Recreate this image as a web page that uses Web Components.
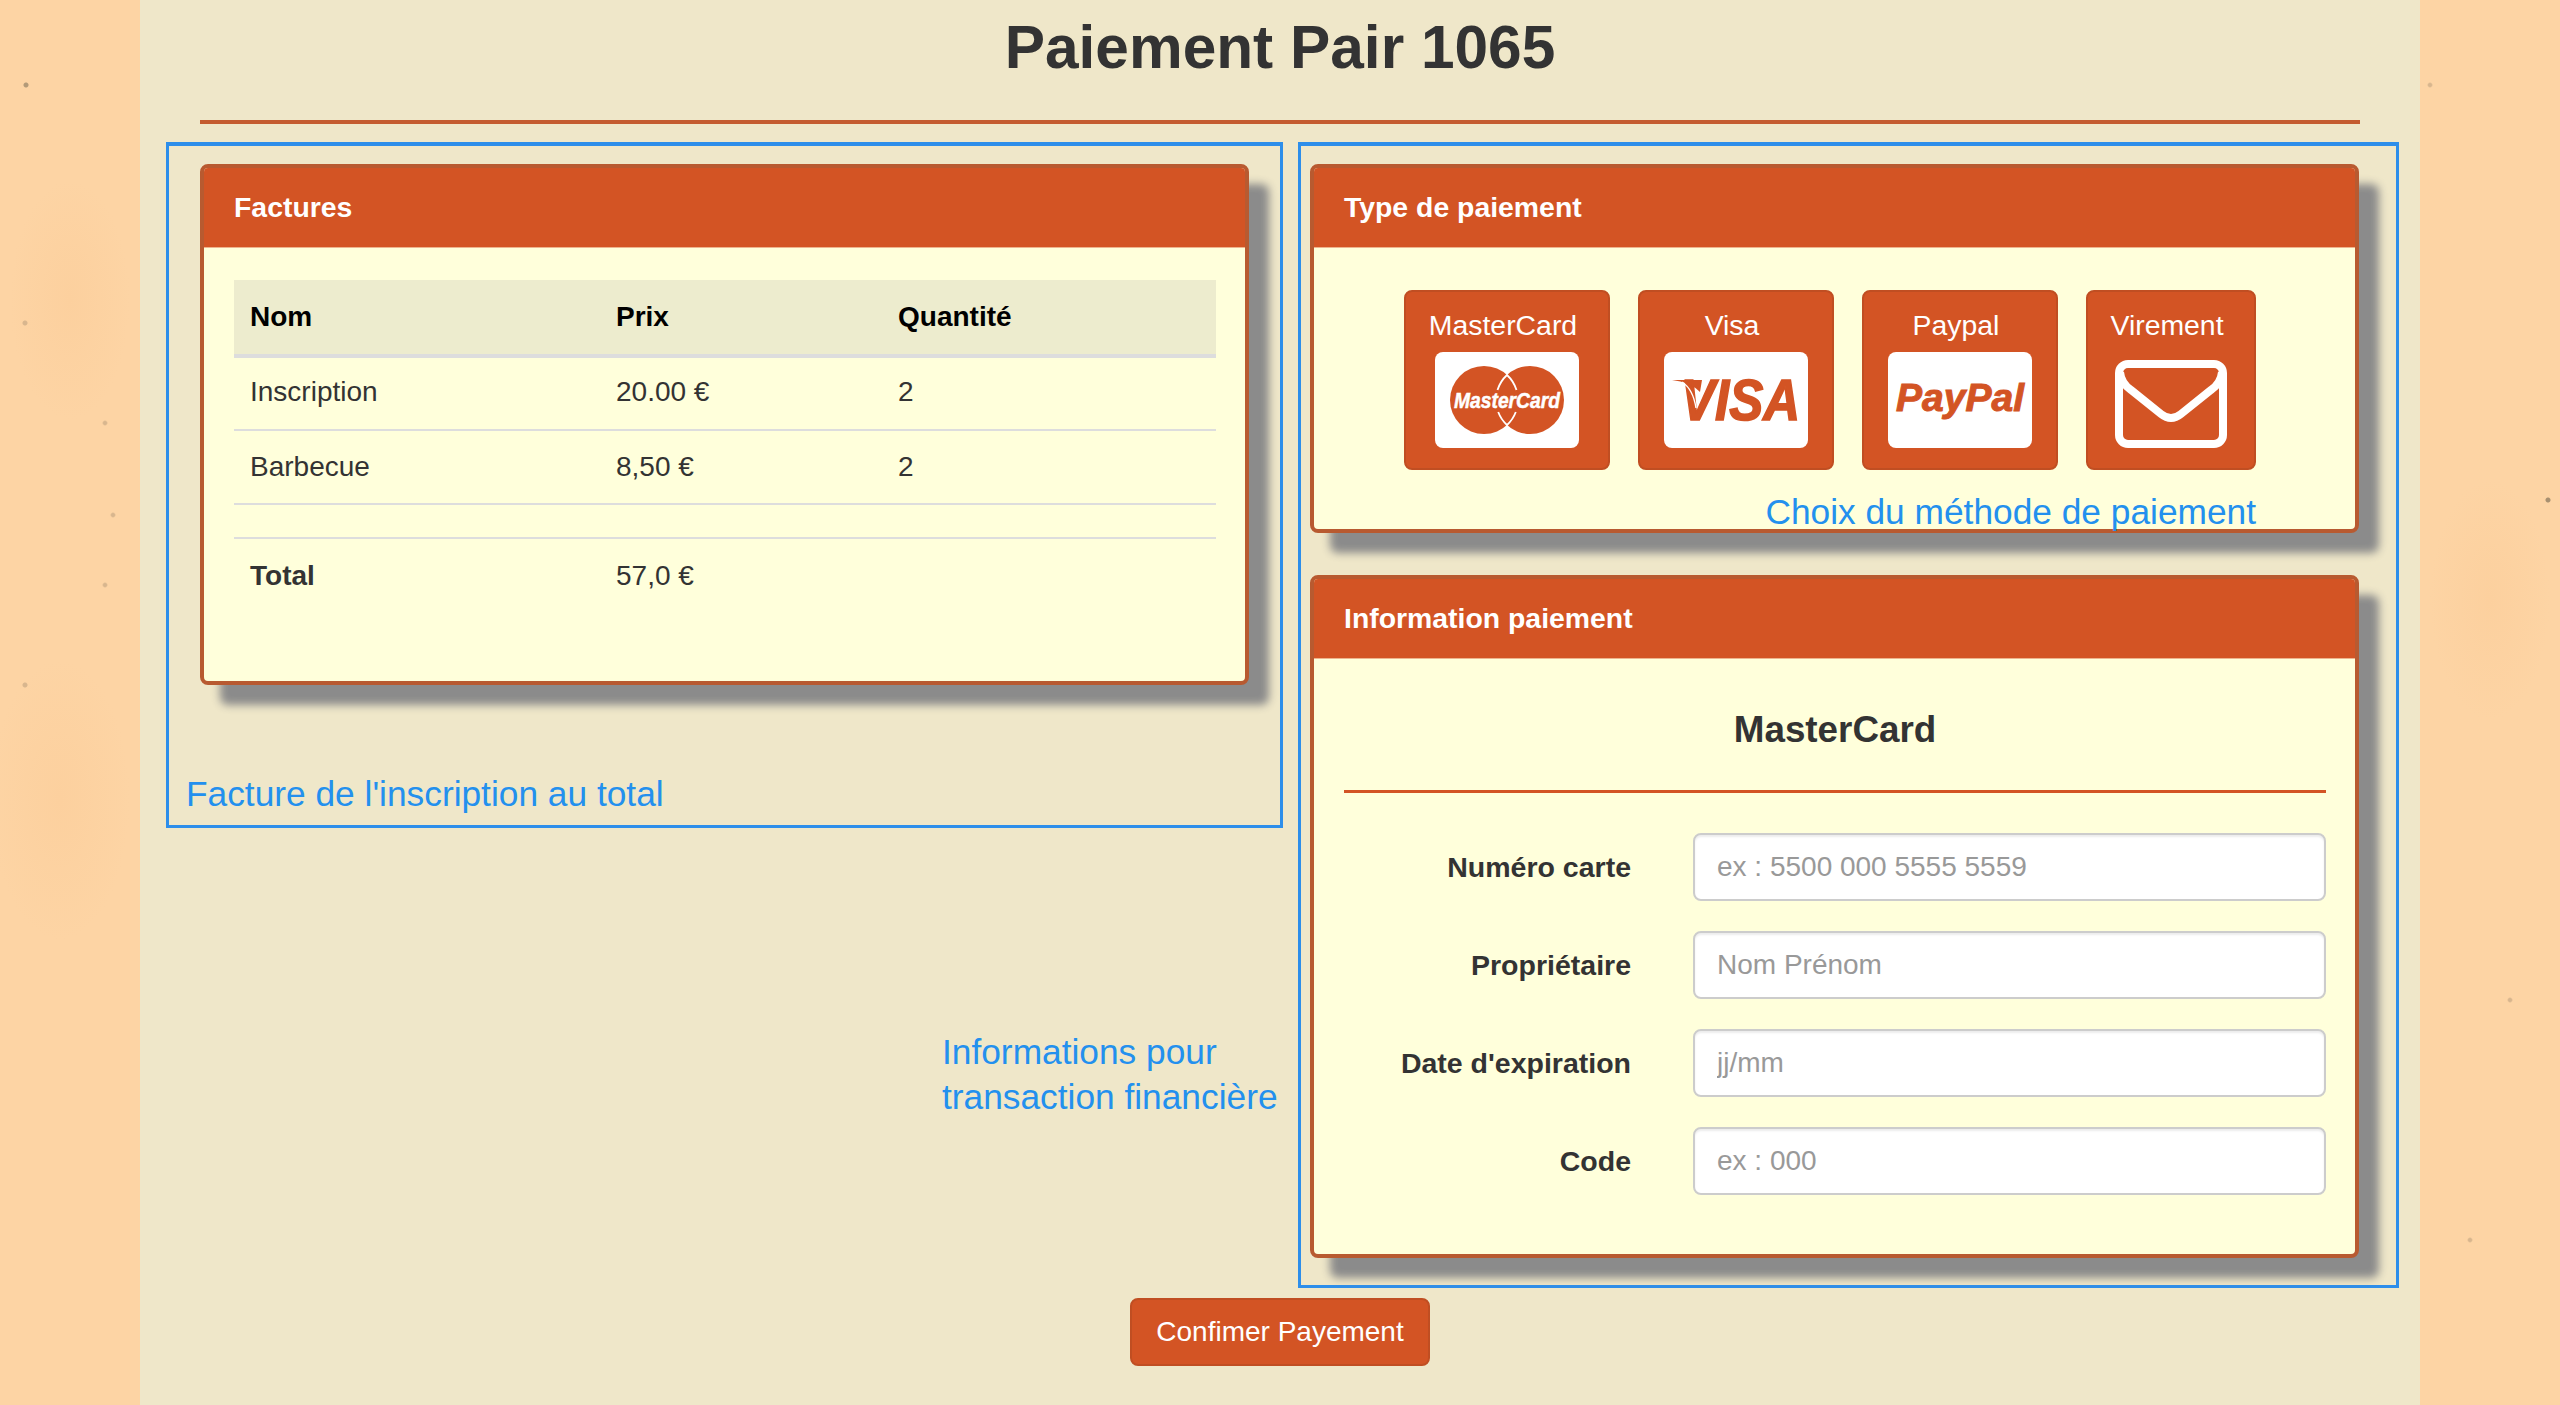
<!DOCTYPE html>
<html lang="fr">
<head>
<meta charset="utf-8">
<title>Paiement Pair 1065</title>
<style>
html, body { margin: 0; padding: 0; }
body { font-family: "Liberation Sans", Arial, sans-serif; font-size: 28px; color: #333; }
</style>
</head>
<body>
<paper-page>
	<page-title>Paiement Pair 1065</page-title>
	<two-columns>
		<div slot="left">
			<note-box style="--pad: 18px 33px 9px 31px; --w: 1117px">
				<pay-panel heading="Factures" style="--body-pad: 32px 29px 69px 30px">
					<invoice-table></invoice-table>
				</pay-panel>
				<note-text style="margin: 86px 0 0 -14px">Facture de l'inscription au total</note-text>
			</note-box>
			<note-text style="margin: 201px 0 0 776px">Informations pour<br>transaction financière</note-text>
		</div>
		<div slot="right">
			<note-box style="--pad: 18px 37px 27px 9px; --w: 1101px">
				<pay-panel heading="Type de paiement" style="--body-pad: 42px 0 0 0; height: 369px">
					<method-list></method-list>
					<note-text style="text-align: right; margin: 21px 99px 0 0; line-height: 42px">Choix du méthode de paiement</note-text>
				</pay-panel>
				<pay-panel heading="Information paiement" style="margin-top: 42px; --body-pad: 47px 29px 59px 30px">
					<card-form heading="MasterCard"></card-form>
				</pay-panel>
			</note-box>
		</div>
	</two-columns>
	<confirm-button>Confimer Payement</confirm-button>
</paper-page>

<template id="method-list-tpl">
	<style>
	:host { display: flex; gap: 28px; margin-left: 90px; }
	svg { display: block; }
	</style>
	<pay-button label="MasterCard" style="width: 206px">
		<svg width="144" height="96" viewBox="0 0 144 96">
			<rect width="144" height="96" rx="8" fill="#fff"/>
			<circle cx="49" cy="48" r="34" fill="#d35424"/>
			<circle cx="95" cy="48" r="34" fill="#d35424"/>
			<path d="M62.5 38 A34 34 0 0 1 72 23 A34 34 0 0 1 81.5 38" fill="none" stroke="#fff" stroke-width="1.8"/>
			<path d="M63.2 60 A34 34 0 0 0 72 73 A34 34 0 0 0 80.8 60" fill="none" stroke="#fff" stroke-width="1.8"/>
			<text x="19" y="56" textLength="106" lengthAdjust="spacingAndGlyphs" font-family="Liberation Sans" font-size="22" font-weight="700" font-style="italic" fill="#fff" stroke="#fff" stroke-width="0.5">MasterCard</text>
		</svg>
	</pay-button>
	<pay-button label="Visa" style="width: 196px">
		<svg width="144" height="96" viewBox="0 0 144 96">
			<rect width="144" height="96" rx="8" fill="#fff"/>
			<text x="17" y="68" textLength="119" lengthAdjust="spacingAndGlyphs" font-family="Liberation Sans" font-size="57" font-weight="700" font-style="italic" fill="#d35424" stroke="#d35424" stroke-width="1.6">VISA</text>
			<path d="M8 28 H38 L36 40 Q26 30 8 28Z" fill="#d35424"/>
			<path d="M18 30 Q29 37 32 56" fill="none" stroke="#fff" stroke-width="1.4"/>
		</svg>
	</pay-button>
	<pay-button label="Paypal" style="width: 196px">
		<svg width="144" height="96" viewBox="0 0 144 96">
			<rect width="144" height="96" rx="8" fill="#fff"/>
			<text x="8" y="59" textLength="128" lengthAdjust="spacingAndGlyphs" font-family="Liberation Sans" font-size="39" font-weight="700" font-style="italic" fill="#d35424" stroke="#d35424" stroke-width="1">PayPal</text>
		</svg>
	</pay-button>
	<pay-button label="Virement" style="width: 170px">
		<svg width="112" height="96" viewBox="0 0 112 96">
			<rect x="4" y="12" width="104" height="80" rx="9" fill="none" stroke="#fff" stroke-width="8"/>
			<path d="M5 20 Q6 31 16 38 L46 62 Q56 70 66 62 L96 38 Q106 31 107 20" fill="none" stroke="#fff" stroke-width="8"/>
		</svg>
	</pay-button>
</template>

<script>
function makeTemplate(html) {
	const template = document.createElement('template');
	template.innerHTML = html;
	return template;
}

class BaseElement extends HTMLElement {
	constructor(template) {
		super();
		this.attachShadow({ mode: 'open' });
		this.shadowRoot.appendChild(template.content.cloneNode(true));
	}
}

const paperTpl = makeTemplate(`
	<style>
	:host {
		display: block;
		min-height: 1405px;
		background-color: #fdd4a4;
		background-image:
			radial-gradient(circle at 26px 85px, #b39a78 0 2px, transparent 3px),
			radial-gradient(circle at 25px 323px, #d8b68e 0 2px, transparent 3px),
			radial-gradient(circle at 105px 423px, #d8b68e 0 1.5px, transparent 3px),
			radial-gradient(circle at 113px 515px, #d8b68e 0 1.5px, transparent 3px),
			radial-gradient(circle at 105px 585px, #d8b68e 0 1.5px, transparent 3px),
			radial-gradient(circle at 25px 685px, #d8b68e 0 2px, transparent 3px),
			radial-gradient(circle at 2548px 500px, #a89070 0 2px, transparent 3px),
			radial-gradient(circle at 2430px 85px, #d8b68e 0 1.5px, transparent 3px),
			radial-gradient(circle at 2510px 1000px, #d8b68e 0 1.5px, transparent 3px),
			radial-gradient(circle at 2470px 1240px, #d8b68e 0 1.5px, transparent 3px),
			radial-gradient(ellipse 60px 120px at 70px 300px, #fcd09e, transparent),
			radial-gradient(ellipse 70px 140px at 60px 800px, #fcd09e, transparent),
			radial-gradient(ellipse 60px 120px at 2490px 600px, #fcd09e, transparent);
	}
	.content {
		display: flow-root;
		width: 2280px;
		min-height: 1405px;
		margin: 0 auto;
		background: #efe7c9;
		box-sizing: border-box;
	}
	</style>
	<div class="content"><slot></slot></div>
`);
class PaperPage extends BaseElement {
	constructor() { super(paperTpl); }
}

const titleTpl = makeTemplate(`
	<style>
	:host { display: block; padding-top: 14px; }
	h1 {
		margin: 0 0 40px;
		font-size: 60.4px;
		line-height: 66px;
		font-weight: 700;
		text-align: center;
		color: #333;
	}
	hr {
		margin: 0 60px 18px;
		border: none;
		height: 4px;
		background: #c45c30;
	}
	</style>
	<h1><slot></slot></h1>
	<hr>
`);
class PageTitle extends BaseElement {
	constructor() { super(titleTpl); }
}

const columnsTpl = makeTemplate(`
	<style>
	:host {
		display: flex;
		align-items: flex-start;
		gap: 15px;
		padding-left: 26px;
	}
	</style>
	<slot name="left"></slot>
	<slot name="right"></slot>
`);
class TwoColumns extends BaseElement {
	constructor() { super(columnsTpl); }
}

const boxTpl = makeTemplate(`
	<style>
	:host {
		display: block;
		box-sizing: border-box;
		width: var(--w);
		padding: var(--pad);
		border: solid #2d8eea;
		border-width: 4px 3px 3px 3px;
	}
	</style>
	<slot></slot>
`);
class NoteBox extends BaseElement {
	constructor() { super(boxTpl); }
}

const noteTpl = makeTemplate(`
	<style>
	:host {
		display: block;
		font-size: 35.3px;
		line-height: 45px;
		color: #2390ee;
		white-space: nowrap;
	}
	</style>
	<slot></slot>
`);
class NoteText extends BaseElement {
	constructor() { super(noteTpl); }
}

const panelTpl = makeTemplate(`
	<style>
	:host {
		display: block;
		box-sizing: border-box;
		width: 1049px;
		background: #ffffdb;
		border: 4px solid #b85a30;
		border-radius: 8px;
		box-shadow: 20px 20px 8px #8b8b8b;
	}
	header {
		box-sizing: border-box;
		height: 80px;
		padding: 0 30px;
		display: flex;
		align-items: center;
		background: #d35424;
		border-bottom: 1px solid #eeb48e;
		border-radius: 4px 4px 0 0;
		color: #fff;
		font-size: 28.4px;
		font-weight: 700;
	}
	.body { padding: var(--body-pad); }
	</style>
	<header></header>
	<div class="body"><slot></slot></div>
`);
class PayPanel extends BaseElement {
	constructor() { super(panelTpl); }
	connectedCallback() {
		this.shadowRoot.querySelector('header').textContent = this.getAttribute('heading');
	}
}

const tableTpl = makeTemplate(`
	<style>
	:host { display: block; }
	table { width: 100%; border-collapse: collapse; table-layout: fixed; font-size: 28px; }
	th, td { padding: 0 16px; text-align: left; height: 74px; box-sizing: border-box; border-bottom: 2px solid #ddd; }
	thead th { height: 76px; background: #edecce; color: #000; border-bottom: 4px solid #ddd; }
	td { color: #333; }
	tr.first td { padding-bottom: 3px; }
	tr.empty td { height: 34px; }
	tr.total td { border-bottom: none; height: 74px; }
	tr.total td:first-child { font-weight: 700; }
	</style>
	<table>
		<colgroup><col style="width: 366px"><col style="width: 282px"><col></colgroup>
		<thead><tr><th>Nom</th><th>Prix</th><th>Quantité</th></tr></thead>
		<tbody>
			<tr class="first"><td>Inscription</td><td>20.00 €</td><td>2</td></tr>
			<tr><td>Barbecue</td><td>8,50 €</td><td>2</td></tr>
			<tr class="empty"><td></td><td></td><td></td></tr>
			<tr class="total"><td>Total</td><td>57,0 €</td><td></td></tr>
		</tbody>
	</table>
`);
class InvoiceTable extends BaseElement {
	constructor() { super(tableTpl); }
}

const payBtnTpl = makeTemplate(`
	<style>
	:host {
		display: flex;
		flex-direction: column;
		align-items: center;
		box-sizing: border-box;
		height: 180px;
		padding-top: 16px;
		background: #d35424;
		border: 2px solid #c04e22;
		border-radius: 8px;
		color: #fff;
		font-size: 28.4px;
	}
	span { line-height: 34px; margin: 0 8px 10px 0; }
	</style>
	<span></span>
	<slot></slot>
`);
class PayButton extends BaseElement {
	constructor() { super(payBtnTpl); }
	connectedCallback() {
		this.shadowRoot.querySelector('span').textContent = this.getAttribute('label');
	}
}

class MethodList extends BaseElement {
	constructor() { super(document.getElementById('method-list-tpl')); }
}

const fieldTpl = makeTemplate(`
	<style>
	:host {
		display: grid;
		grid-template-columns: 287px 1fr;
		column-gap: 62px;
		align-items: center;
	}
	label { text-align: right; font-weight: 700; font-size: 28.5px; color: #333; }
	input {
		box-sizing: border-box;
		width: 100%;
		height: 68px;
		padding: 0 22px;
		background: #fff;
		border: 2px solid #ccc;
		border-radius: 8px;
		box-shadow: inset 0 2px 2px rgba(0, 0, 0, 0.075);
		font: 28px "Liberation Sans", Arial, sans-serif;
		color: #555;
		outline: none;
	}
	input::placeholder { color: #999; opacity: 1; }
	</style>
	<label for="f"></label>
	<input id="f" type="text">
`);
class FormField extends BaseElement {
	constructor() { super(fieldTpl); }
	connectedCallback() {
		this.shadowRoot.querySelector('label').textContent = this.getAttribute('label');
		this.shadowRoot.querySelector('input').placeholder = this.getAttribute('hint');
	}
}

const formTpl = makeTemplate(`
	<style>
	:host { display: block; }
	h3 { margin: 0; font-size: 36.8px; line-height: 48px; font-weight: 700; text-align: center; color: #333; }
	hr { margin: 36px 0 40px; border: none; height: 3px; background: #d35424; }
	.fields { display: flex; flex-direction: column; gap: 30px; }
	</style>
	<h3></h3>
	<hr>
	<div class="fields">
		<form-field label="Numéro carte" hint="ex : 5500 000 5555 5559"></form-field>
		<form-field label="Propriétaire" hint="Nom Prénom"></form-field>
		<form-field label="Date d'expiration" hint="jj/mm"></form-field>
		<form-field label="Code" hint="ex : 000"></form-field>
	</div>
`);
class CardForm extends BaseElement {
	constructor() { super(formTpl); }
	connectedCallback() {
		this.shadowRoot.querySelector('h3').textContent = this.getAttribute('heading');
	}
}

const confirmTpl = makeTemplate(`
	<style>
	:host { display: flex; justify-content: center; margin-top: 10px; }
	button {
		box-sizing: border-box;
		width: 300px;
		height: 68px;
		padding: 0;
		background: #d35424;
		border: 2px solid #c04e22;
		border-radius: 8px;
		color: #fff;
		font: 28px "Liberation Sans", Arial, sans-serif;
	}
	</style>
	<button><slot></slot></button>
`);
class ConfirmButton extends BaseElement {
	constructor() { super(confirmTpl); }
}

window.customElements.define('paper-page', PaperPage);
window.customElements.define('page-title', PageTitle);
window.customElements.define('two-columns', TwoColumns);
window.customElements.define('note-box', NoteBox);
window.customElements.define('note-text', NoteText);
window.customElements.define('pay-panel', PayPanel);
window.customElements.define('invoice-table', InvoiceTable);
window.customElements.define('pay-button', PayButton);
window.customElements.define('method-list', MethodList);
window.customElements.define('form-field', FormField);
window.customElements.define('card-form', CardForm);
window.customElements.define('confirm-button', ConfirmButton);
</script>
</body>
</html>
